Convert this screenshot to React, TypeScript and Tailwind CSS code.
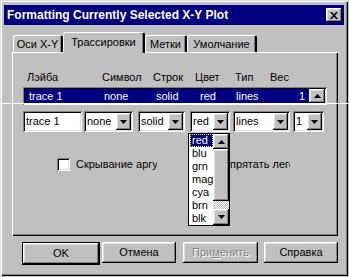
import React from "react";

const raised =
  "shadow-[inset_-1px_-1px_#000,inset_1px_1px_#fff,inset_-2px_-2px_#808080,inset_2px_2px_#dfdfdf]";
const sunken =
  "shadow-[inset_1px_1px_#808080,inset_-1px_-1px_#fff,inset_2px_2px_#000,inset_-2px_-2px_#dfdfdf]";

const DownArrow = () => (
  <svg width="7" height="4" viewBox="0 0 7 4">
    <path d="M0 0h7L3.5 4z" fill="#000" />
  </svg>
);

const UpArrow = () => (
  <svg width="7" height="4" viewBox="0 0 7 4">
    <path d="M0 4h7L3.5 0z" fill="#000" />
  </svg>
);

const Combo = ({ value, w, children }: { value: string; w: string; children?: React.ReactNode }) => (
  <div className={`relative ${w} h-[21px] bg-white ${sunken} flex items-center`}>
    <span className="pl-[3px] flex-1 leading-none">{value}</span>
    <div className={`w-[15px] h-[17px] mr-[2px] bg-[#c0c0c0] ${raised} flex items-center justify-center`}>
      <DownArrow />
    </div>
    {children}
  </div>
);

const Tab = ({ label, active, w }: { label: string; active?: boolean; w: string }) => (
  <div
    className={`${w} flex items-center justify-center rounded-t-[3px] border-l border-t border-white border-r-2 border-r-[#000] shadow-[inset_-1px_0_#808080] bg-[#c0c0c0] ${
      active ? "h-[21px] relative z-10 mb-[-1px] pb-[2px]" : "h-[17px] mt-[3px]"
    }`}
  >
    {label}
  </div>
);

const Button = ({ label, className = "", disabled }: { label: React.ReactNode; className?: string; disabled?: boolean }) => (
  <div
    className={`h-[21px] bg-[#c0c0c0] ${raised} flex items-center justify-center ${
      disabled ? "text-[#808080] [text-shadow:1px_1px_#fff]" : ""
    } ${className}`}
  >
    {label}
  </div>
);

export default function App() {
  const colours = ["red", "blu", "grn", "mag", "cya", "brn", "blk"];

  return (
    <div className="w-[349px] h-[277px] bg-[#c0c0c0] relative overflow-hidden font-['Liberation_Sans',Arial,sans-serif] text-[11px] text-black">
      <div className="w-[348px] h-[276px] px-[4px] pt-[5px] flex flex-col shadow-[inset_1px_1px_#dfdfdf,inset_2px_2px_#fff,inset_-1px_-1px_#000,inset_-2px_-2px_#808080]">
        {/* title bar */}
        <div className="h-[20px] bg-[#000080] flex items-center justify-between pl-[3px] pr-[2px]">
          <span className="text-white font-bold text-[12px] leading-none">
            Formatting Currently Selected X-Y Plot
          </span>
          <div className={`w-[16px] h-[14px] bg-[#c0c0c0] ${raised} flex items-center justify-center`}>
            <svg width="8" height="7" viewBox="0 0 8 7">
              <path d="M0 0h2l2 2.5L6 0h2L5 3.5 8 7H6L4 4.5 2 7H0l3-3.5z" fill="#000" />
            </svg>
          </div>
        </div>

        {/* tabs + panel */}
        <div className="pl-[8px] pr-[6px] pt-[7px]">
          <div className="flex pl-[1px] h-[20px] items-start">
            <Tab label="Оси X-Y" w="w-[50px]" />
            <Tab label="Трассировки" w="w-[82px]" active />
            <Tab label="Метки" w="w-[42px]" />
            <Tab label="Умолчание" w="w-[70px]" />
          </div>
          <div className="h-[184px] shadow-[inset_1px_1px_#fff,inset_-1px_-1px_#000,inset_-2px_-2px_#808080] pl-[11px] pt-[19px]">
            {/* column headers */}
            <div className="flex h-[13px] leading-[13px] pl-[4px]">
              <span className="w-[75px]">Лэйба</span>
              <span className="w-[51px]">Символ</span>
              <span className="w-[42px]">Строк</span>
              <span className="w-[40px]">Цвет</span>
              <span className="w-[35px]">Тип</span>
              <span>Вес</span>
            </div>

            {/* list */}
            <div className={`mt-[3px] w-[304px] h-[18px] p-[2px] bg-white ${sunken} flex`}>
              <div className="flex-1 bg-[#000080] text-white flex items-center leading-none pl-[4px] pr-[4px]">
                <span className="w-[75px]">trace 1</span>
                <span className="w-[52px]">none</span>
                <span className="w-[44px]">solid</span>
                <span className="w-[36px]">red</span>
                <span className="flex-1">lines</span>
                <span>1</span>
              </div>
              <div className={`w-[16px] bg-[#c0c0c0] ${raised} flex items-center justify-center`}>
                <UpArrow />
              </div>
            </div>

            {/* edit row */}
            <div className="mt-[6px] flex">
              <div className={`w-[59px] h-[21px] bg-white ${sunken} flex items-center pl-[3px] leading-none`}>
                trace 1
              </div>
              <div className="ml-[2px]">
                <Combo value="none" w="w-[49px]" />
              </div>
              <div className="ml-[5px]">
                <Combo value="solid" w="w-[47px]" />
              </div>
              <div className="ml-[5px] relative z-20">
                <Combo value="red" w="w-[40px]">
                  <div className="absolute left-[-2px] top-[22px] w-[42px] h-[93px] bg-white border border-black flex">
                    <div className="flex-1 flex flex-col pl-[1px]">
                      {colours.map((c, i) => (
                        <div key={c} className="h-[13px] flex items-center leading-none">
                          <span
                            className={
                              i === 0
                                ? "bg-[#000080] text-white w-full h-full flex items-center pl-[2px] outline outline-1 outline-dotted outline-[#ffff00] -outline-offset-1"
                                : "pl-[2px]"
                            }
                          >
                            {c}
                          </span>
                        </div>
                      ))}
                    </div>
                    <div className="w-[16px] flex flex-col">
                      <div className={`h-[15px] bg-[#c0c0c0] ${raised} flex items-center justify-center`}>
                        <UpArrow />
                      </div>
                      <div className={`h-[52px] bg-[#c0c0c0] ${raised}`} />
                      <div className="flex-1 bg-[repeating-conic-gradient(#c0c0c0_0_25%,#fff_0_50%)] bg-[length:2px_2px]" />
                      <div className={`h-[16px] bg-[#c0c0c0] ${raised} flex items-center justify-center`}>
                        <DownArrow />
                      </div>
                    </div>
                  </div>
                </Combo>
              </div>
              <div className="ml-[3px]">
                <Combo value="lines" w="w-[57px]" />
              </div>
              <div className="ml-[3px]">
                <Combo value="1" w="w-[31px]" />
              </div>
            </div>

            {/* checkboxes */}
            <div className="mt-[26px] ml-[34px] flex items-center h-[13px]">
              <div className={`w-[13px] h-[13px] bg-white ${sunken}`} />
              <span className="ml-[6px] w-[81px] overflow-hidden whitespace-nowrap leading-none">
                Скрывание аргументов
              </span>
              <div className={`ml-[46px] w-[13px] h-[13px] bg-white ${sunken}`} />
              <span className="ml-[6px] w-[68px] overflow-hidden whitespace-nowrap leading-none">
                Спрятать легенду
              </span>
            </div>
          </div>
        </div>

        {/* buttons */}
        <div className="mt-[6px] pl-[18px] flex">
          <div className="border border-black">
            <Button label="OK" className="w-[76px] h-[19px]" />
          </div>
          <Button label="Отмена" className="ml-[2px] w-[74px]" />
          <Button
            label={
              <span>
                При<span className="underline">м</span>енить
              </span>
            }
            className="ml-[7px] w-[75px]"
            disabled
          />
          <Button label="Справка" className="ml-[6px] w-[74px]" />
        </div>
      </div>

      {/* stray redraw line across the dialog */}
      <div className="absolute left-0 right-0 top-[103px] h-px bg-white z-30" />
    </div>
  );
}
